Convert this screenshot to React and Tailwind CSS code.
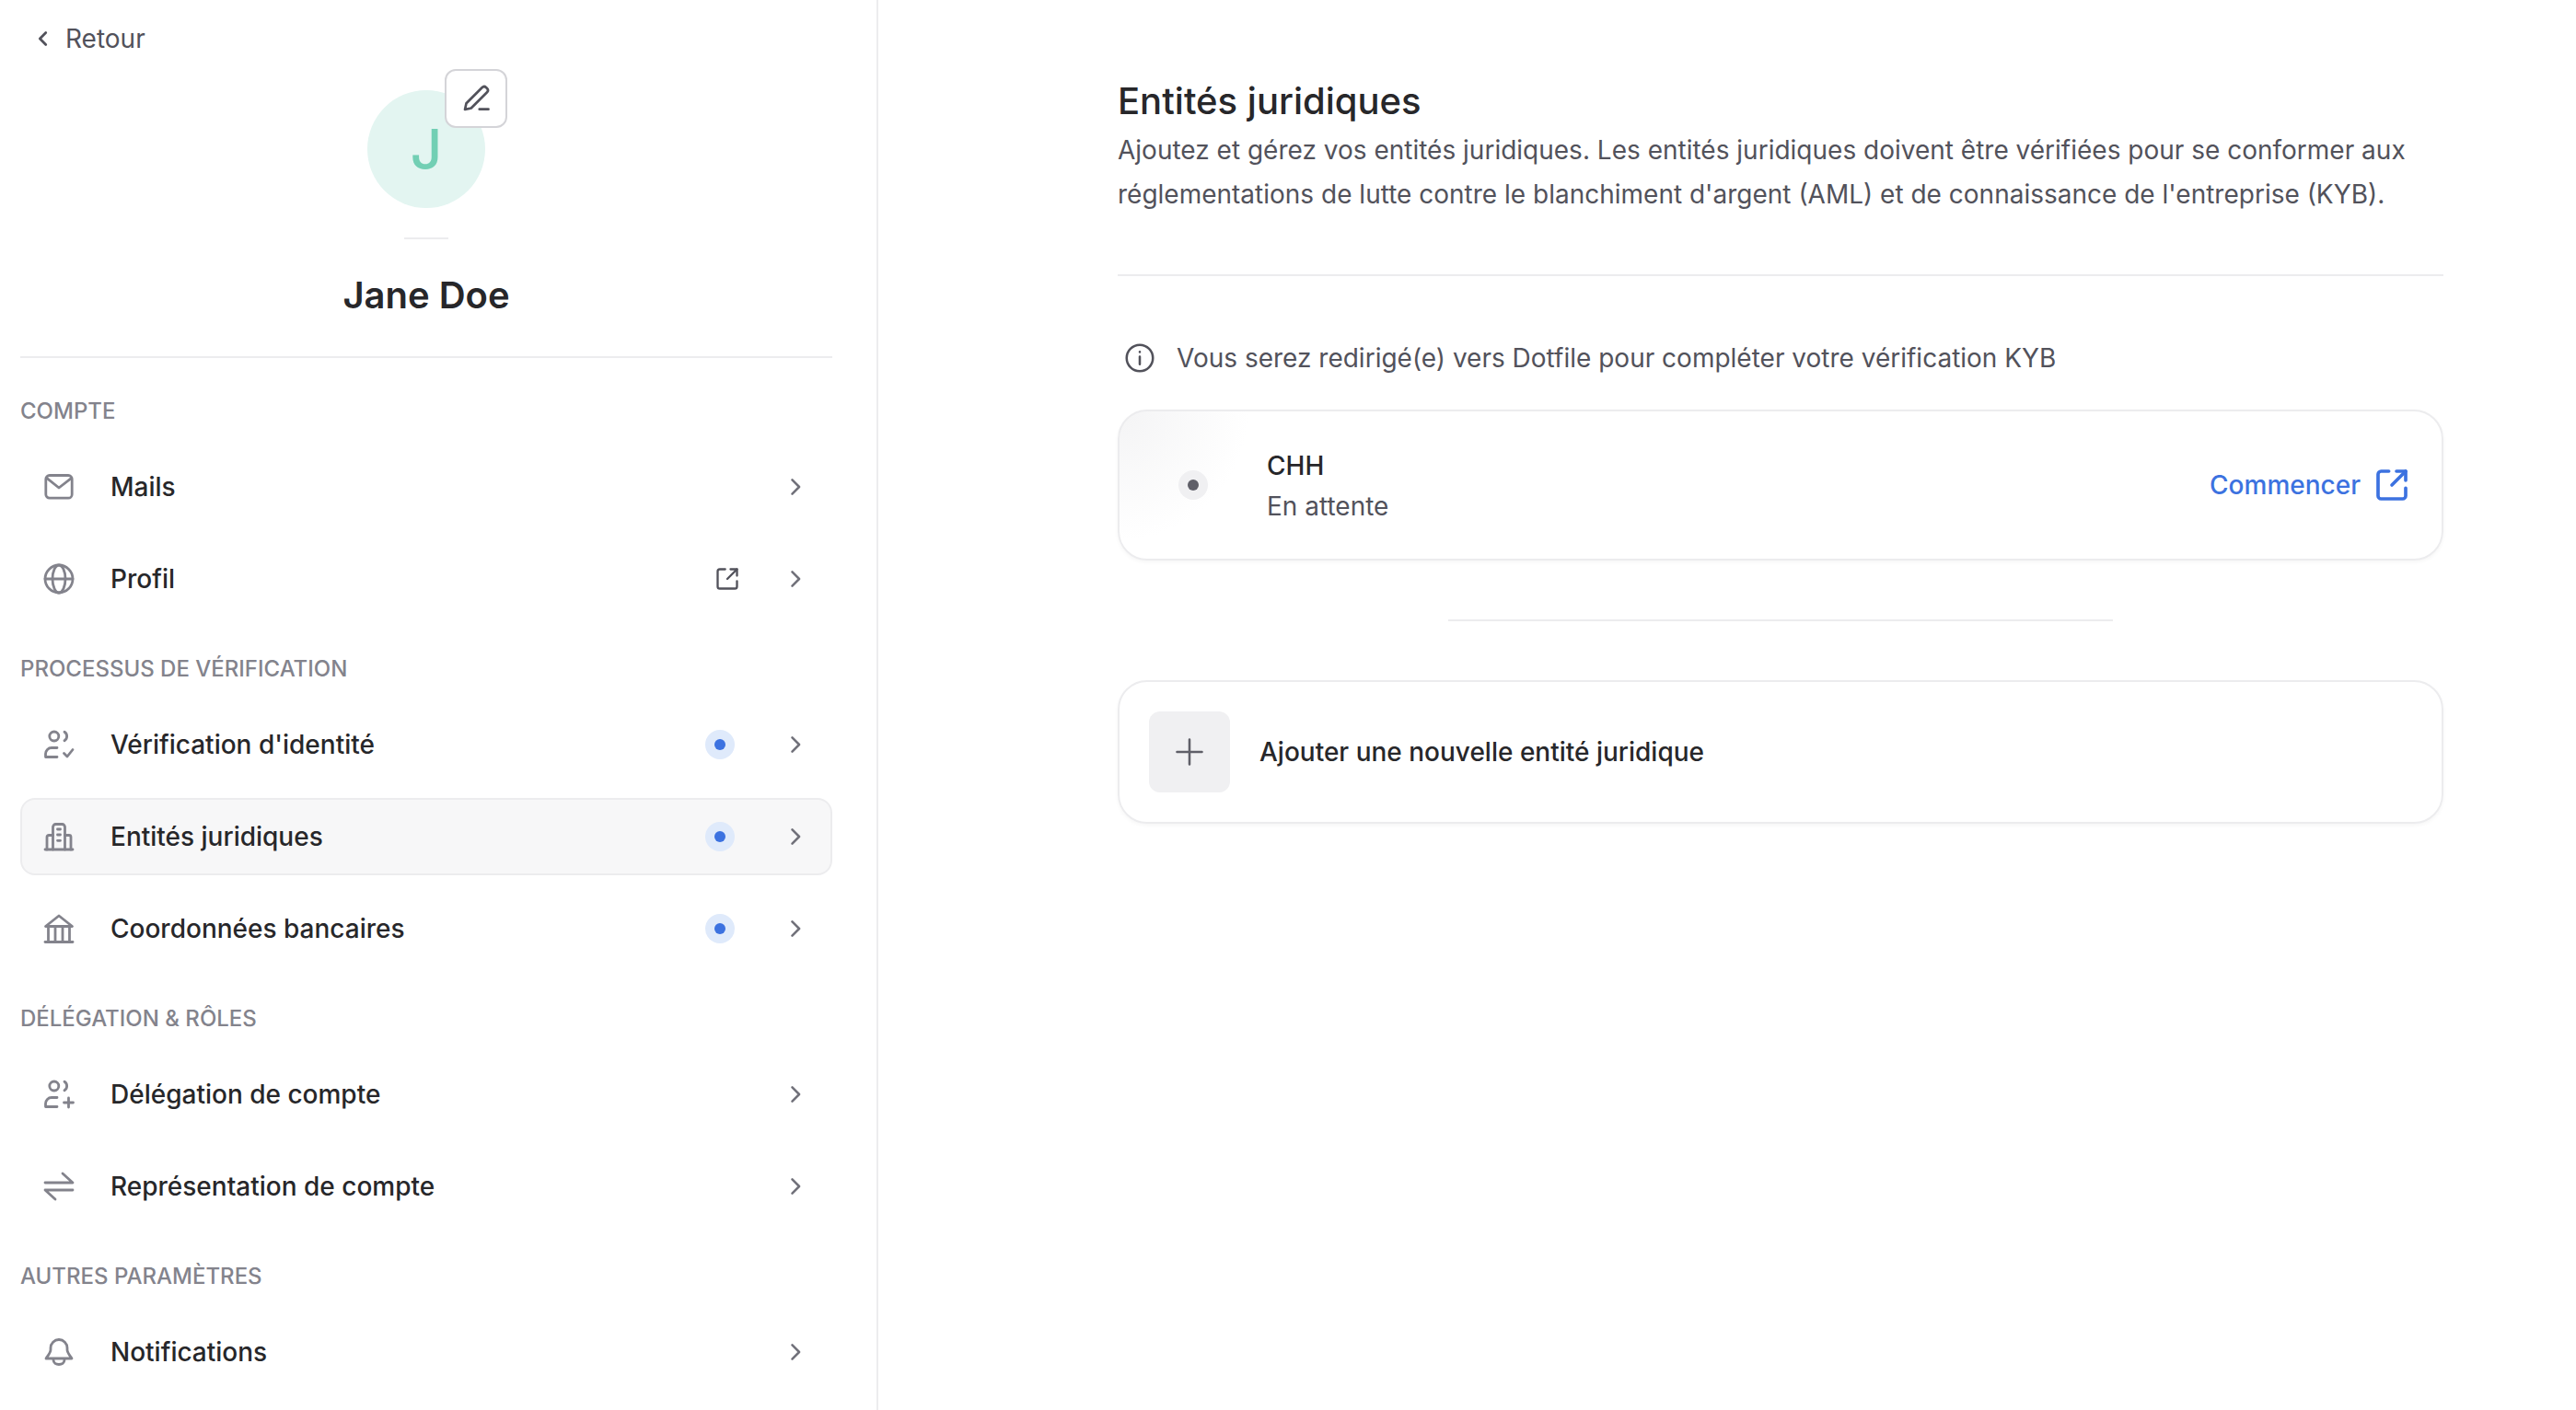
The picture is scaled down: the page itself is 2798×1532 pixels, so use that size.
import React from "react";

const Icon = ({ children, size = 36, sw = 2, className = "" }) => (
  <svg width={size} height={size} viewBox="0 0 24 24" fill="none" stroke="currentColor" strokeWidth={sw} strokeLinecap="round" strokeLinejoin="round" className={className}>
    {children}
  </svg>
);

const Nav = ({ children }) => (
  <svg width="36" height="36" viewBox="0 0 36 36" fill="none" stroke="currentColor" strokeWidth="2.800" strokeLinecap="round" strokeLinejoin="round">
    {children}
  </svg>
);

const Chevron = () => (
  <svg width="28" height="28" viewBox="0 0 24 24" fill="none" stroke="#71717a" strokeWidth="2.200" strokeLinecap="round" strokeLinejoin="round">
    <path d="M9 5.500 15.500 12 9 18.500" />
  </svg>
);

const Mail = () => (
  <Nav><rect x="3.800" y="5.500" width="28.400" height="24.700" rx="4" /><path d="M4.700 8.300 18 19 31.700 8.300" /></Nav>
);
const Globe = () => (
  <Nav><circle cx="18" cy="18" r="15" /><ellipse cx="18" cy="18" rx="7" ry="15" /><path d="M3 18h30" /></Nav>
);
const People = () => (
  <>
    <circle cx="12.800" cy="9" r="5" />
    <path d="M24 4.300a5.500 5.500 0 0 1 0 9.400" />
    <path d="M16 21.500h-6a6.500 6.500 0 0 0-6.500 6.500v3.500H16" />
  </>
);
const UserCheck = () => (
  <Nav><People /><path d="M23.500 27.500l3.500 3.500 6-7.500" /></Nav>
);
const UserPlus = () => (
  <Nav><People /><path d="M28.500 22v10M23.500 27h10" /></Nav>
);
const Building = () => (
  <Nav>
    <path d="M3 32h30" />
    <path d="M11.500 32V7.500a3 3 0 0 1 3-3h7a3 3 0 0 1 3 3V32" />
    <path d="M11.500 16.500H7a2 2 0 0 0-2 2V32" />
    <path d="M24.500 16.500H29a2 2 0 0 1 2 2V32" />
    <path d="M16.500 10h3M16.500 16h3M16.500 22.300h3" />
  </Nav>
);
const Bank = () => (
  <Nav>
    <path d="M3.500 15.500 18 4l14.500 11.500z" />
    <path d="M3 32.500h30" />
    <path d="M6.500 16v16M14 16v16M22 16v16M29.500 16v16" />
  </Nav>
);
const Swap = () => (
  <Nav><path d="M3 14h30L22 4" /><path d="M33 22H3l11 10" /></Nav>
);
const Bell = () => (
  <Nav>
    <path d="M18 4.500a9 9 0 0 0-9 9v2c0 3-2.500 6-5 9.500h28c-2.500-3.500-5-6.500-5-9.500v-2a9 9 0 0 0-9-9z" />
    <path d="M12 26.500c0 3.500 3 5 6 5s6-1.500 6-5" />
  </Nav>
);
const External = ({ size, sw, className }) => (
  <Icon size={size} sw={sw} className={className}><path d="M10 3H5A2 2 0 0 0 3 5v14a2 2 0 0 0 2 2h14a2 2 0 0 0 2-2v-5" /><path d="M15 3h6v6" /><path d="M21 3l-9 9" /></Icon>
);

const Dot = () => (
  <span className="mr-[8px] flex h-[32px] w-[32px] items-center justify-center rounded-full bg-[#dfeafb]">
    <span className="h-[12px] w-[12px] rounded-full bg-[#3c72e0]" />
  </span>
);

const Row = ({ icon, label, dot, ext, active }) => (
  <div className={`flex h-[84px] items-center rounded-[16px] text-[28px] font-medium text-[#27272a] ${active ? "border-2 border-[#ececee] bg-[#f7f7f8] pl-[22px] pr-[24px]" : "pl-[24px] pr-[26px]"}`}>
    <span className="flex w-[36px] justify-center text-[#83838c]">{icon}</span>
    <span className="ml-[38px] flex-1">{label}</span>
    {dot && <Dot />}
    {ext && <External size={28} sw={2} className="mr-[2px] text-[#52525b]" />}
    <span className="ml-[44px] flex"><Chevron /></span>
  </div>
);

const Section = ({ title, children, className = "" }) => (
  <div className={className}>
    <div className="mb-[25px] text-[24px] font-medium leading-[30px] text-[#83838c]">{title}</div>
    <div className="flex flex-col gap-[16px]">{children}</div>
  </div>
);

export default function App() {
  return (
    <div className="flex h-screen w-full overflow-hidden bg-white [font-family:Inter,sans-serif]">
      <aside className="flex w-[954px] shrink-0 flex-col border-r-2 border-[#ececee] pl-[22px] pr-[48px]">
        <div className="mt-[22px] flex h-[40px] items-center gap-[13px] pl-[14px] text-[28px] text-[#52525b]">
          <svg width="22" height="22" viewBox="0 0 24 24" fill="none" stroke="#52525b" strokeWidth="3" strokeLinecap="round" strokeLinejoin="round"><path d="M15 5 8 12l7 7" /></svg>
          Retour
        </div>
        <div className="relative mx-auto mt-[36px] flex h-[128px] w-[128px] items-center justify-center rounded-full bg-[#e3f5f1] text-[60px] font-medium text-[#72cfb4]">
          J
          <span className="absolute left-[84px] top-[-23px] flex h-[64px] w-[68px] items-center justify-center rounded-[12px] border-2 border-[#d4d4d8] bg-white text-[#52525b]">
            <Icon size={36} sw={1.8}><path d="M4 20l1-4.500L16.500 4a2 2 0 0 1 2.800 0l.7.7a2 2 0 0 1 0 2.800L8.500 19z" /><path d="M14.500 19.800H21" /></Icon>
          </span>
        </div>
        <div className="mx-auto mt-[32px] h-[2px] w-[48px] bg-[#ececee]" />
        <div className="mt-[33px] text-center text-[40px] font-semibold leading-[56px] text-[#27272a]">Jane Doe</div>
        <div className="mt-[38px] h-[2px] bg-[#ececee]" />

        <Section title="COMPTE" className="mt-[43px]">
          <Row icon={<Mail />} label="Mails" />
          <Row icon={<Globe />} label="Profil" ext />
        </Section>
        <Section title="PROCESSUS DE VÉRIFICATION" className="mt-[41px]">
          <Row icon={<UserCheck />} label="Vérification d'identité" dot />
          <Row icon={<Building />} label="Entités juridiques" dot active />
          <Row icon={<Bank />} label="Coordonnées bancaires" dot />
        </Section>
        <Section title="DÉLÉGATION & RÔLES" className="mt-[41px]">
          <Row icon={<UserPlus />} label="Délégation de compte" />
          <Row icon={<Swap />} label="Représentation de compte" />
        </Section>
        <Section title="AUTRES PARAMÈTRES" className="mt-[41px]">
          <Row icon={<Bell />} label="Notifications" />
        </Section>
      </aside>

      <main className="ml-[260px] w-[1440px] shrink-0">
        <h1 className="mb-[3px] mt-[84px] text-[40px] font-medium leading-[52px] text-[#27272a]">Entités juridiques</h1>
        <p className="text-[28px] leading-[48px] text-[#52525b]">
          Ajoutez et gérez vos entités juridiques. Les entités juridiques doivent être vérifiées pour se conformer aux<br />
          réglementations de lutte contre le blanchiment d'argent (AML) et de connaissance de l'entreprise (KYB).
        </p>
        <div className="mt-[63px] h-[2px] bg-[#ececee]" />
        <div className="mt-[69px] flex h-[40px] items-center gap-[22px] pl-[6px] text-[28px] text-[#52525b]">
          <Icon size={36} sw={1.7}><circle cx="12" cy="12" r="9.500" /><path d="M12 11v5.500M12 7.500v.1" /></Icon>
          Vous serez redirigé(e) vers Dotfile pour compléter votre vérification KYB
        </div>
        <div className="mt-[36px] flex h-[164px] items-center rounded-[32px] border-2 border-[#ececee] bg-[radial-gradient(circle_at_0%_0%,#f4f4f5,#ffffff_140px)] pl-[64px] pr-[34px] shadow-[0_2px_4px_rgba(0,0,0,0.04)]">
          <span className="flex h-[32px] w-[32px] items-center justify-center rounded-full bg-[#f0f0f2]">
            <span className="h-[12px] w-[12px] rounded-full bg-[#5f5f68]" />
          </span>
          <div className="ml-[64px] flex-1 pt-[2px]">
            <div className="text-[28px] font-medium leading-[44px] text-[#27272a]">CHH</div>
            <div className="text-[28px] leading-[44px] text-[#52525b]">En attente</div>
          </div>
          <span className="text-[28px] font-medium text-[#3c72e0]">Commencer</span>
          <External size={40} sw={2.200} className="ml-[14px] text-[#3c72e0]" />
        </div>
        <div className="mx-auto mt-[64px] h-[2px] w-[722px] bg-[#ececee]" />
        <div className="mt-[64px] flex h-[156px] items-center rounded-[32px] border-2 border-[#ececee] pl-[32px] shadow-[0_2px_4px_rgba(0,0,0,0.04)]">
          <span className="flex h-[88px] w-[88px] items-center justify-center rounded-[12px] bg-[#f0f0f2] text-[#5f5f68]">
            <Icon size={36} sw={1.7}><path d="M12 3v18M3 12h18" /></Icon>
          </span>
          <span className="ml-[32px] text-[28px] font-medium text-[#27272a]">Ajouter une nouvelle entité juridique</span>
        </div>
      </main>
    </div>
  );
}
